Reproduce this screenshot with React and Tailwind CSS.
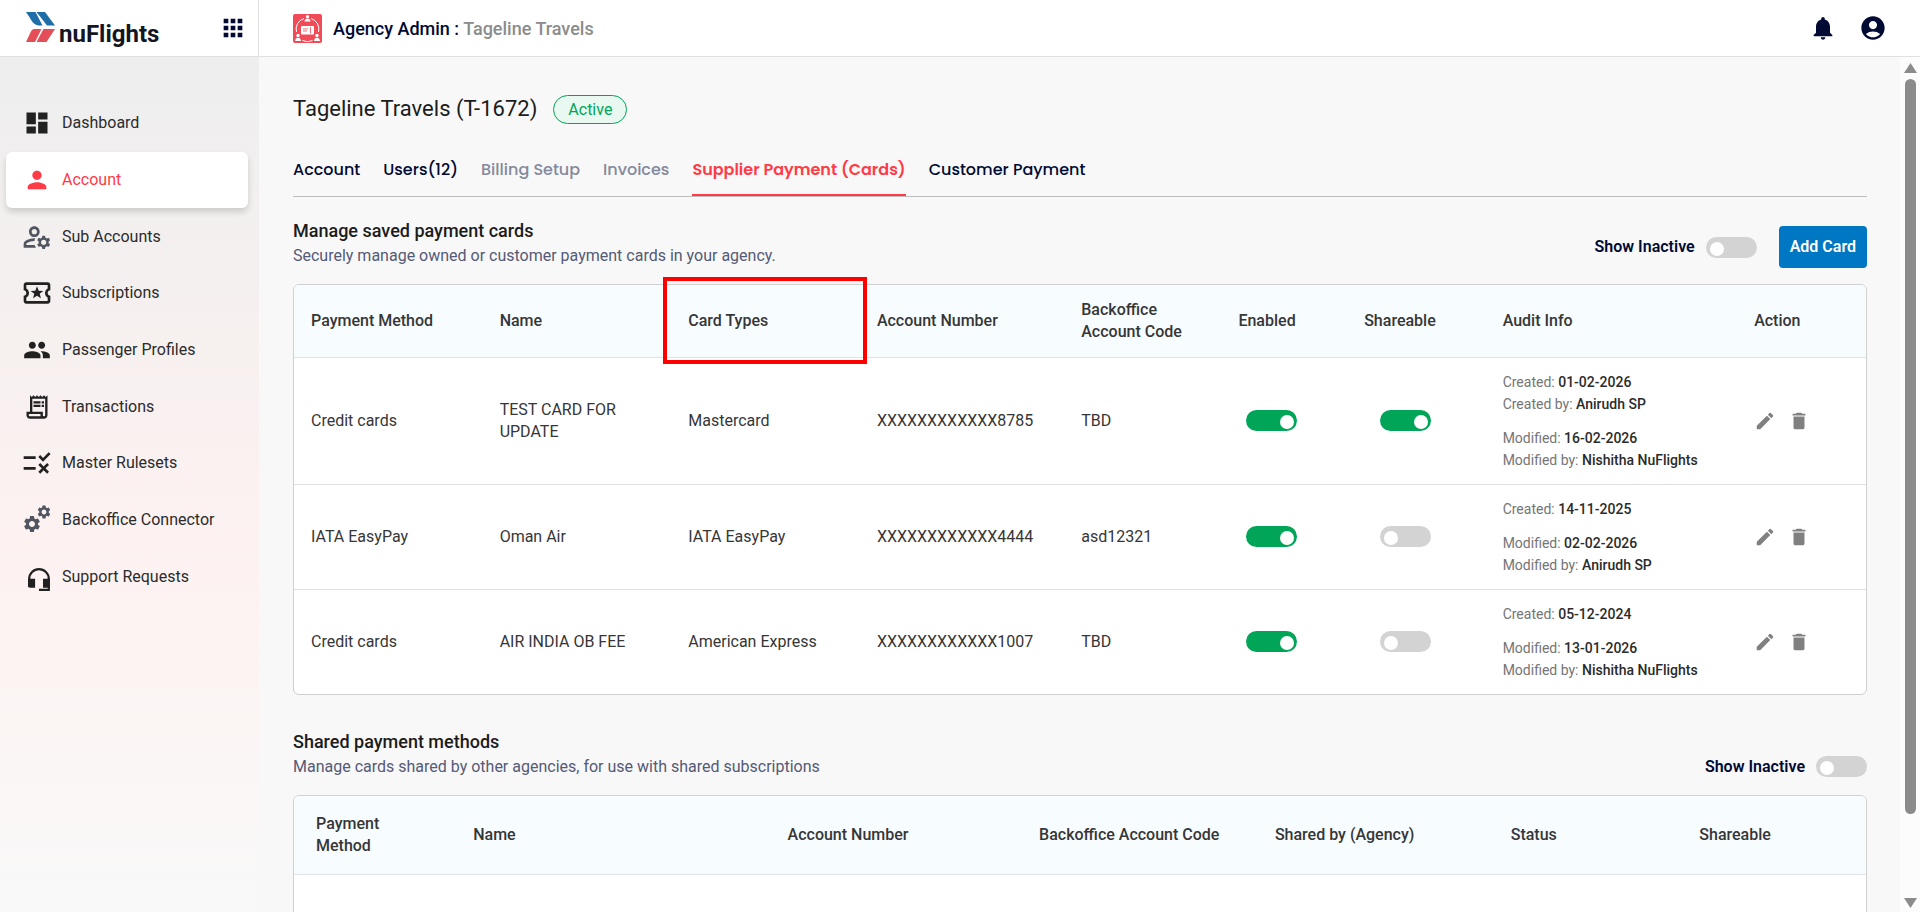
import {
  MdDashboard, MdPerson, MdOutlineManageAccounts, MdOutlineLocalActivity, MdPeople, MdOutlineReceiptLong,
  MdRule, MdSettings, MdEdit, MdDelete, MdNotifications, MdAccountCircle, MdApps,
} from "react-icons/md";

function GearsIcon() {
  return (
    <svg width="32" height="32" viewBox="0 0 32 32" aria-hidden="true">
      <MdSettings x="1" y="10" size="20" />
      <MdSettings x="15" y="0" size="16" />
    </svg>
  );
}

function HeadsetIcon() {
  return (
    <svg width="32" height="32" viewBox="0 0 32 32" aria-hidden="true">
      <path d="M8.200 26v-8a9.800 9.800 0 0 1 19.600 0v10.800H18" fill="none" stroke="currentColor" strokeWidth="2.200" />
      <path d="M7.100 17.700h7v9h-5a2 2 0 0 1-2-2zM22 17.700h6.900v9H22z" fill="currentColor" />
    </svg>
  );
}

const NAV = [
  { label: "Dashboard", icon: MdDashboard, tone: "text-[28px] text-[#212121]" },
  { label: "Account", icon: MdPerson, active: true, tone: "text-[28px] text-[#ff3b47]" },
  { label: "Sub Accounts", icon: MdOutlineManageAccounts, tone: "text-[32px] text-[#50555f]" },
  { label: "Subscriptions", icon: MdOutlineLocalActivity, tone: "text-[32px] text-[#212121]" },
  { label: "Passenger Profiles", icon: MdPeople, tone: "text-[28px] text-[#212121]" },
  { label: "Transactions", icon: MdOutlineReceiptLong, tone: "text-[28px] text-[#212121]" },
  { label: "Master Rulesets", icon: MdRule, tone: "text-[32px] text-[#212121]" },
  { label: "Backoffice Connector", icon: GearsIcon, tone: "text-[#50555f]" },
  { label: "Support Requests", icon: HeadsetIcon, tone: "text-[#212121]" },
];

const TABS = [
  { label: "Account" },
  { label: "Users(12)" },
  { label: "Billing Setup", muted: true },
  { label: "Invoices", muted: true },
  { label: "Supplier Payment (Cards)", active: true },
  { label: "Customer Payment" },
];

const CARDS = [
  {
    method: "Credit cards", name: "TEST CARD FOR UPDATE", type: "Mastercard", number: "XXXXXXXXXXXX8785", code: "TBD", shareable: true,
    created: "01-02-2026", createdBy: "Anirudh SP", modified: "16-02-2026", modifiedBy: "Nishitha NuFlights",
  },
  {
    method: "IATA EasyPay", name: "Oman Air", type: "IATA EasyPay", number: "XXXXXXXXXXXX4444", code: "asd12321", shareable: false,
    created: "14-11-2025", modified: "02-02-2026", modifiedBy: "Anirudh SP",
  },
  {
    method: "Credit cards", name: "AIR INDIA OB FEE", type: "American Express", number: "XXXXXXXXXXXX1007", code: "TBD", shareable: false,
    created: "05-12-2024", modified: "13-01-2026", modifiedBy: "Nishitha NuFlights",
  },
];

function Logo() {
  return (
    <a href="#home" aria-label="nuFlights" className="flex items-baseline gap-[3px] pt-1">
      <svg width="30" height="30" viewBox="0 1 30 30" aria-hidden="true">
        <path d="M0 1h9.500l7 13.500h-3.500C8 14 5.500 10 4 7z" fill="#1f6ea8" />
        <path d="M10.500 1h8.500l10 13.500h-8z" fill="#1f6ea8" />
        <path d="M8 18h7.500l-6.500 13H0l4-8.500C5 20 6 18.500 8 18z" fill="#e34e58" />
        <path d="M17.500 18H29l-8.500 13H10.500z" fill="#e34e58" />
      </svg>
      <span className="text-2xl leading-7 font-bold text-[#14161f]">nuFlights</span>
    </a>
  );
}

function AgencyIcon() {
  return (
    <svg width="29" height="29" viewBox="0 0 29 29" aria-hidden="true">
      <rect width="29" height="29" rx="2" fill="#f04b57" />
      <g fill="none" stroke="#fff" strokeWidth="1">
        <path d="M11 4.500A11 11 0 0 0 3.500 18M18 4.500A11 11 0 0 1 25.500 18M9.500 26.500a11 11 0 0 0 10 0" />
      </g>
      <g fill="#fff">
        <circle cx="14.500" cy="2.700" r="1.600" /><path d="M11.500 7.500c0-4 6-4 6 0z" />
        <circle cx="5" cy="21.500" r="1.700" /><path d="M2 27c0-4.500 6-4.500 6 0z" />
        <circle cx="24" cy="21.500" r="1.700" /><path d="M21 27c0-4.500 6-4.500 6 0z" />
        <rect x="8" y="12" width="13" height="8.500" rx="1" />
      </g>
      <path d="M10 15h5M10 17h4M17.500 13v6.500" stroke="#f04b57" strokeWidth=".8" />
    </svg>
  );
}

function Toggle({ label, on = false }) {
  return (
    <input
      type="checkbox"
      role="switch"
      aria-label={label}
      defaultChecked={on}
      className="block h-[21px] w-[51px] shrink-0 cursor-pointer appearance-none rounded-full bg-[#d3d3d3] pt-[5px] pr-[3px] pl-1 before:block before:h-3.5 before:w-3.5 before:rounded-full before:bg-white checked:bg-[#00a558] checked:before:ml-auto"
    />
  );
}

function ShowInactive() {
  return (
    <label className="flex items-center gap-[11px] text-base font-semibold text-[#000a33]">
      Show Inactive
      <Toggle />
    </label>
  );
}

function SectionTitle({ title, text, children }) {
  return (
    <div className="flex items-end justify-between">
      <div>
        <h2 className="text-lg leading-[26px] font-medium text-[#1c1c1c]">{title}</h2>
        <p className="text-base leading-6 text-[#555a76]">{text}</p>
      </div>
      <div className="flex items-center gap-[22px]">{children}</div>
    </div>
  );
}

function AuditLine({ label, value }) {
  return (
    <p>
      {label}: <span className="font-medium text-[#2b2b2b]">{value}</span>
    </p>
  );
}

function HeadCell({ children, className = "px-[17px]" }) {
  return <th className={`border-b border-[#dfe3e6] text-left font-medium ${className}`}>{children}</th>;
}

function SavedCards() {
  return (
    <div className="overflow-hidden rounded-md border border-[#d0d0d0] bg-white">
      <table className="w-full table-fixed border-collapse text-base leading-[22px] text-[#363636]">
        <colgroup>
          <col className="w-[12%]" /><col className="w-[12%]" /><col className="w-[12%]" /><col className="w-[13%]" /><col className="w-[10%]" />
          <col className="w-[8%]" /><col className="w-[9%]" /><col className="w-[16%]" /><col className="w-[8%]" />
        </colgroup>
        <thead className="bg-[#f7fcff]">
          <tr className="h-[72px]">
            <HeadCell>Payment Method</HeadCell>
            <HeadCell>Name</HeadCell>
            <HeadCell>Card Types</HeadCell>
            <HeadCell>Account Number</HeadCell>
            <HeadCell>Backoffice Account Code</HeadCell>
            <HeadCell>Enabled</HeadCell>
            <HeadCell>Shareable</HeadCell>
            <HeadCell className="pl-3.5">Audit Info</HeadCell>
            <HeadCell className="pl-3.5">Action</HeadCell>
          </tr>
        </thead>
        <tbody>
          {CARDS.map((card) => (
            <tr key={card.number} className="border-b border-[#e0e0e0] last:border-b-0">
              <td className="px-[17px]">{card.method}</td>
              <td className="px-[17px]">{card.name}</td>
              <td className="px-[17px]">{card.type}</td>
              <td className="px-[17px]">{card.number}</td>
              <td className="px-[17px]">{card.code}</td>
              <td className="pl-[25px]"><Toggle label={`${card.name} enabled`} on /></td>
              <td className="pl-[33px]"><Toggle label={`${card.name} shareable`} on={card.shareable} /></td>
              <td className="py-[13px] pl-3.5 text-sm leading-[22px] text-[#757575]">
                <AuditLine label="Created" value={card.created} />
                {card.createdBy && <AuditLine label="Created by" value={card.createdBy} />}
                <div className="mt-3">
                  <AuditLine label="Modified" value={card.modified} />
                  <AuditLine label="Modified by" value={card.modifiedBy} />
                </div>
              </td>
              <td className="pl-3.5">
                <div className="flex gap-3 text-[22px] text-[#808080]">
                  <button type="button" aria-label={`Edit ${card.name}`}><MdEdit /></button>
                  <button type="button" aria-label={`Delete ${card.name}`}><MdDelete /></button>
                </div>
              </td>
            </tr>
          ))}
        </tbody>
      </table>
    </div>
  );
}

function SharedMethods() {
  return (
    <div className="h-60 overflow-hidden rounded-md border border-[#d0d0d0] bg-white">
      <table className="w-full table-fixed border-collapse text-base leading-[22px] text-[#363636]">
        <colgroup>
          <col className="w-[10%]" /><col className="w-[20%]" /><col className="w-[16%]" /><col className="w-[15%]" /><col className="w-[15%]" />
          <col className="w-[12%]" /><col className="w-[12%]" />
        </colgroup>
        <thead className="bg-[#f7fcff]">
          <tr className="h-[79px]">
            <HeadCell className="px-[22px]">Payment Method</HeadCell>
            <HeadCell className="px-[22px]">Name</HeadCell>
            <HeadCell className="px-[22px]">Account Number</HeadCell>
            <HeadCell className="px-[22px]">Backoffice Account Code</HeadCell>
            <HeadCell className="px-[22px]">Shared by (Agency)</HeadCell>
            <HeadCell className="px-[22px]">Status</HeadCell>
            <HeadCell className="px-[22px]">Shareable</HeadCell>
          </tr>
        </thead>
      </table>
    </div>
  );
}

export default function App() {
  return (
    <div className="flex h-screen flex-col overflow-hidden bg-[#f8f8f8] font-['Roboto',sans-serif]">
      <header className="flex h-[57px] shrink-0 border-b border-[#e0e0e0] bg-white">
        <div className="flex w-[259px] shrink-0 items-center justify-between border-r border-[#e0e0e0] pr-[11px] pl-[26px]">
          <Logo />
          <button type="button" aria-label="Apps" className="text-[28px] text-[#000a33]"><MdApps /></button>
        </div>
        <div className="flex flex-1 items-center justify-between pr-[33px] pl-[34px]">
          <div className="flex items-center gap-[11px] text-lg font-medium text-[#000a33]">
            <AgencyIcon />
            <p className="pt-0.5">Agency Admin : <span className="text-[#8c8c8c]">Tageline Travels</span></p>
          </div>
          <div className="flex items-center gap-[22px] text-[28px] text-[#000a33]">
            <button type="button" aria-label="Notifications"><MdNotifications /></button>
            <button type="button" aria-label="Profile"><MdAccountCircle /></button>
          </div>
        </div>
      </header>
      <div className="flex min-h-0 flex-1">
        <aside className="w-[259px] shrink-0 bg-linear-to-b from-[#eeeeee] via-[#fdf2f1] via-60% to-[#f9f9f9] px-1.5 pt-[38px]">
          <nav className="grid h-[510px] auto-rows-fr pr-[5px]">
            {NAV.map(({ label, icon: Icon, active, tone }) => (
              <a
                key={label}
                href="#nav"
                className={active
                  ? "flex items-center gap-[9px] rounded-md bg-white pl-[15px] text-base text-[#ff3b47] shadow-[0_4px_6px_rgba(0,0,0,0.15)]"
                  : "flex items-center gap-[9px] pl-[15px] text-base text-[#2b2b2b]"}
              >
                <span className={`flex w-8 shrink-0 justify-center ${tone}`}><Icon /></span>
                {label}
              </a>
            ))}
          </nav>
        </aside>
        <main className="min-w-0 flex-1 overflow-hidden pt-[34px] pr-[33px] pl-[34px]">
          <div className="flex items-center gap-4">
            <h1 className="text-[22px] leading-9 text-[#1c1c1c]">Tageline Travels (T-1672)</h1>
            <span className="rounded-full border border-[#00a558] bg-[#e9f8f0] px-3.5 text-base leading-[27px] text-[#00a558]">Active</span>
          </div>
          <nav className="mt-[31px] flex gap-[23px] border-b border-[#bdbdbd] font-['Poppins','Inter',sans-serif] text-base leading-6">
            {TABS.map((tab) => (
              <a
                key={tab.label}
                href="#tab"
                className={tab.active
                  ? "border-b-2 border-[#ff3b47] pb-3 font-semibold text-[#ff3b47]"
                  : tab.muted ? "pb-3.5 font-medium text-[#85899b]" : "pb-3.5 font-medium text-[#000a33]"}
              >
                {tab.label}
              </a>
            ))}
          </nav>
          <section className="mt-[21px]">
            <SectionTitle title="Manage saved payment cards" text="Securely manage owned or customer payment cards in your agency.">
              <ShowInactive />
              <button type="button" className="h-[42px] rounded-sm bg-[#0077c2] px-[11px] text-base font-semibold text-white">Add Card</button>
            </SectionTitle>
            <div className="mt-4"><SavedCards /></div>
          </section>
          <section className="mt-[34px]">
            <SectionTitle title="Shared payment methods" text="Manage cards shared by other agencies, for use with shared subscriptions">
              <ShowInactive />
            </SectionTitle>
            <div className="mt-4"><SharedMethods /></div>
          </section>
        </main>
        <div className="flex w-5 shrink-0 flex-col items-center bg-[#fcfcfc] pt-1.5 pb-1" aria-hidden="true">
          <svg width="13" height="10" viewBox="0 0 13 10"><path d="M6.500 0 13 10H0z" fill="#8b8b8b" /></svg>
          <div className="mt-1.5 h-[87%] w-[11px] rounded-full bg-[#8b8b8b]" />
          <svg className="mt-auto" width="13" height="10" viewBox="0 0 13 10"><path d="M0 0h13L6.500 10z" fill="#8b8b8b" /></svg>
        </div>
      </div>
      <div className="pointer-events-none absolute top-[277px] left-[663px] h-[87px] w-[204px] border-4 border-[#ff0000]" />
    </div>
  );
}
